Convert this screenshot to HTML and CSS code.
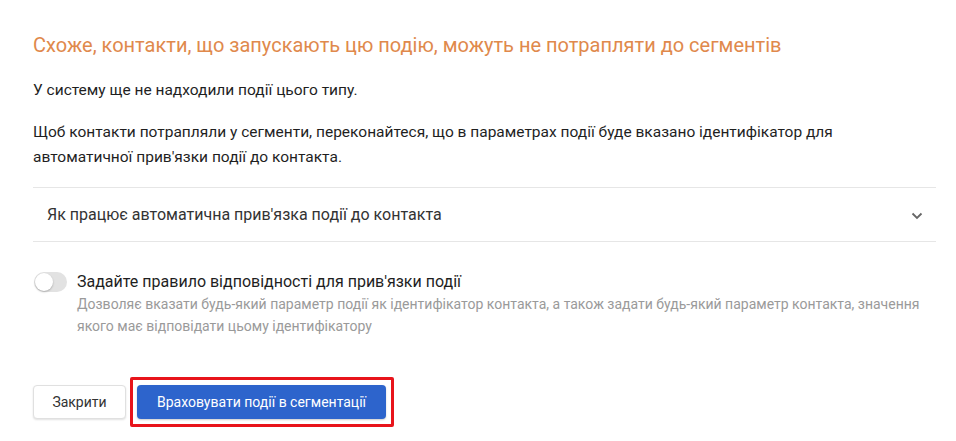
FILE: index.html
```html
<!DOCTYPE html>
<html lang="uk">
<head>
<meta charset="utf-8">
<link rel="stylesheet" href="styles.css">
</head>
<body>
<div class="dialog">
  <h2 class="title">Схоже, контакти, що запускають цю подію, можуть не потрапляти до сегментів</h2>
  <p class="text text-first">У систему ще не надходили події цього типу.</p>
  <p class="text text-second">Щоб контакти потрапляли у сегменти, переконайтеся, що в параметрах події буде вказано ідентифікатор для автоматичної прив'язки події до контакта.</p>
  <div class="accordion">
    <span class="acc-label">Як працює автоматична прив'язка події до контакта</span>
    <svg class="chevron" width="12" height="8" viewBox="0 0 12 8"><path d="M1.5 1.5 L6 6 L10.5 1.5" fill="none" stroke="#666" stroke-width="1.8"/></svg>
  </div>
  <div class="toggle-row">
    <span class="toggle"><span class="knob"></span></span>
    <div class="toggle-text">
      <div class="toggle-label">Задайте правило відповідності для прив'язки події</div>
      <div class="toggle-desc">Дозволяє вказати будь-який параметр події як ідентифікатор контакта, а також задати будь-який параметр контакта, значення якого має відповідати цьому ідентифікатору</div>
    </div>
  </div>
  <div class="actions">
    <button class="btn btn-secondary">Закрити</button>
    <div class="highlight">
      <button class="btn btn-primary">Враховувати події в сегментації</button>
    </div>
  </div>
</div>
</body>
</html>
```

FILE: styles.css
```css
* { box-sizing: border-box; }
html, body { margin: 0; padding: 0; background: #fff; }
body {
  font-family: Roboto, "Noto Sans", sans-serif;
  color: #222;
  width: 956px;
  height: 441px;
  overflow: hidden;
}
.dialog {
  padding: 32px 20px 0 33px;
}
.title {
  margin: 0;
  font-size: 20px;
  font-weight: 400;
  color: #e0894c;
  line-height: 26px;
}
.text {
  margin: 0;
  font-size: 15.5px;
  line-height: 25px;
  color: #1f1f1f;
}
.text-first { margin-top: 20px; }
.text-second { margin-top: 17px; }
.accordion {
  margin-top: 17px;
  border-top: 1px solid #e6e6e6;
  border-bottom: 1px solid #e6e6e6;
  height: 55px;
  display: flex;
  align-items: center;
  justify-content: space-between;
  padding: 0 13px 0 14px;
}
.acc-label { font-size: 16px; color: #333; }
.chevron { display: block; margin-top: 2px; }
.toggle-row {
  display: flex;
  align-items: flex-start;
  margin-top: 29px;
}
.toggle {
  width: 33px;
  height: 20px;
  border-radius: 10px;
  background: #e2e2e2;
  position: relative;
  margin: 1px 10px 0 1px;
  flex: none;
}
.knob {
  position: absolute;
  left: 1px;
  top: 1px;
  width: 18px;
  height: 18px;
  border-radius: 50%;
  background: #fff;
  box-shadow: 0 1px 2px rgba(0,0,0,0.25);
}
.toggle-text { flex: 1; }
.toggle-label { font-size: 16px; line-height: 22px; color: #1f1f1f; }
.toggle-desc { font-size: 14px; line-height: 22px; color: #9a9a9a; }
.actions {
  display: flex;
  align-items: center;
  gap: 4px;
  margin-top: 40px;
}
.btn {
  font-family: Roboto, "Noto Sans", sans-serif;
  font-size: 14px;
  height: 34px;
  border-radius: 4px;
  cursor: pointer;
}
.btn-secondary {
  width: 93px;
  background: #fff;
  border: 1px solid #e0e0e0;
  color: #333;
  box-shadow: 0 1px 2px rgba(0,0,0,0.12);
}
.highlight {
  border: 3px solid #e8141b;
  padding: 5px 5px 5px 4px;
  border-radius: 2px;
}
.btn-primary {
  display: block;
  width: 249px;
  background: #2d64cc;
  border: none;
  color: #fff;
  box-shadow: 0 1px 2px rgba(0,0,0,0.2);
}
```
